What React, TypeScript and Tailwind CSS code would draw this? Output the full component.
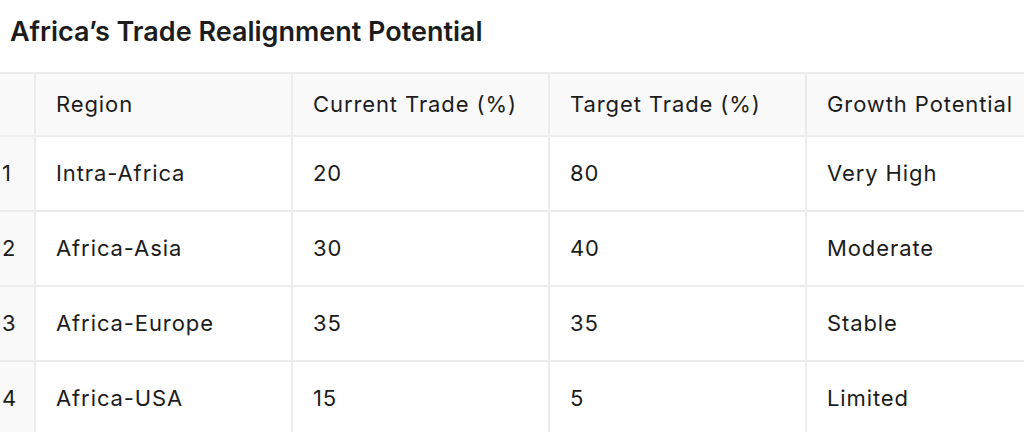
const rows = [
  { id: 1, region: 'Intra-Africa', current: '20', target: '80', growth: 'Very High' },
  { id: 2, region: 'Africa-Asia', current: '30', target: '40', growth: 'Moderate' },
  { id: 3, region: 'Africa-Europe', current: '35', target: '35', growth: 'Stable' },
  { id: 4, region: 'Africa-USA', current: '15', target: '5', growth: 'Limited' },
];

const headers = ['Region', 'Current Trade (%)', 'Target Trade (%)', 'Growth Potential'];

export default function App() {
  return (
    <div className="h-[432px] w-[1024px] overflow-hidden bg-white font-['Inter',sans-serif] text-[#1c1c1c]">
      <h1 className="flex h-[72px] items-center pl-[10px] pb-[8px] text-[27px] font-semibold">
        Africa’s Trade Realignment Potential
      </h1>
      <table className="w-[1063px] table-fixed border-collapse text-[22px] tracking-[0.9px]">
        <colgroup>
          <col className="w-[35px]" />
          <col className="w-[257px]" />
          <col className="w-[257px]" />
          <col className="w-[257px]" />
          <col className="w-[257px]" />
        </colgroup>
        <thead>
          <tr className="h-[63px] bg-[#f9f9f9]">
            <th className="border-y-2 border-r-2 border-[#ececec]" />
            {headers.map((h) => (
              <th key={h} className="whitespace-nowrap border-2 border-[#ececec] pl-[20px] text-left font-normal">
                {h}
              </th>
            ))}
          </tr>
        </thead>
        <tbody>
          {rows.map((r) => (
            <tr key={r.id} className="h-[75px]">
              <td className="border-y-2 border-r-2 border-[#ececec] bg-[#f9f9f9] pl-[2px]">{r.id}</td>
              <td className="border-2 border-[#ececec] pl-[20px]">{r.region}</td>
              <td className="border-2 border-[#ececec] pl-[20px]">{r.current}</td>
              <td className="border-2 border-[#ececec] pl-[20px]">{r.target}</td>
              <td className="border-2 border-[#ececec] pl-[20px]">{r.growth}</td>
            </tr>
          ))}
        </tbody>
      </table>
    </div>
  );
}
